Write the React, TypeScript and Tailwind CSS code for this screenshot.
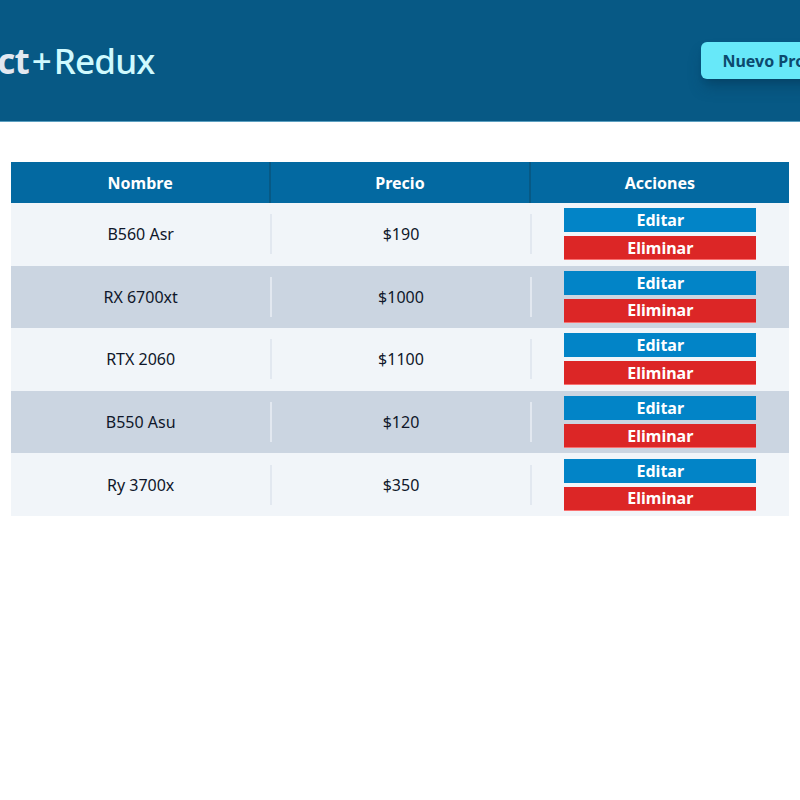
import React from "react";

const productos = [
  { id: 1, nombre: "B560 Asr", precio: 190 },
  { id: 2, nombre: "RX 6700xt", precio: 1000 },
  { id: 3, nombre: "RTX 2060", precio: 1100 },
  { id: 4, nombre: "B550 Asu", precio: 120 },
  { id: 5, nombre: "Ry 3700x", precio: 350 },
];

const Header = () => {
  return (
    <header className="h-[122px] bg-[#075985] border-b border-[#5b9fc0] flex justify-center items-center overflow-hidden">
      <div className="w-[1000px] shrink-0 flex justify-between items-center pl-[35px] pr-[8px]">
        <h1 className="text-[35px] leading-none tracking-tight">
          <span className="font-bold text-[#e2e8f0]">React</span>
          <span className="text-[#cffafe] font-medium">
            <span className="mx-[3px]">+</span>Redux
          </span>
        </h1>
        <button className="h-[37px] px-[21px] rounded-md bg-[#67e8f9] text-[#0c4a6e] font-bold text-[16px] shadow-lg shadow-sky-950/40">
          Nuevo Producto &rarr;
        </button>
      </div>
    </header>
  );
};

const Fila = ({ nombre, precio, par }: { nombre: string; precio: number; par: boolean }) => {
  return (
    <tr className={par ? "bg-[#cbd5e1]" : "bg-[#f1f5f9]"}>
      <td className="h-[62.6px] text-center p-0">{nombre}</td>
      <td className="p-0">
        <div className="border-l-2 border-[#e2e8f0] h-[40px] flex items-center justify-center">${precio}</div>
      </td>
      <td className="p-0">
        <div className="border-l-2 border-[#e2e8f0] h-[40px] flex items-center justify-center">
          <div className="flex flex-col gap-[4px] w-[192px] -my-2">
            <button className="h-[24px] bg-[#0284c7] text-white font-bold leading-none">Editar</button>
            <button className="h-[24px] bg-[#dc2626] text-white font-bold leading-none border-b border-[#f87171]">Eliminar</button>
          </div>
        </div>
      </td>
    </tr>
  );
};

export default function App() {
  return (
    <div className="min-h-screen bg-white text-[16px] text-[#0f172a]" style={{ fontFamily: '"Noto Sans", sans-serif' }}>
      <Header />
      <main className="px-[11px] mt-[40px]">
        <table className="w-full table-fixed border-collapse">
          <thead>
            <tr className="bg-[#0369a1] text-white h-[41px]">
              <th className="font-bold border-r-2 border-[#075985]">Nombre</th>
              <th className="font-bold border-r-2 border-[#075985]">Precio</th>
              <th className="font-bold">Acciones</th>
            </tr>
          </thead>
          <tbody>
            {productos.map((p, i) => (
              <Fila key={p.id} nombre={p.nombre} precio={p.precio} par={i % 2 === 1} />
            ))}
          </tbody>
        </table>
      </main>
    </div>
  );
}
